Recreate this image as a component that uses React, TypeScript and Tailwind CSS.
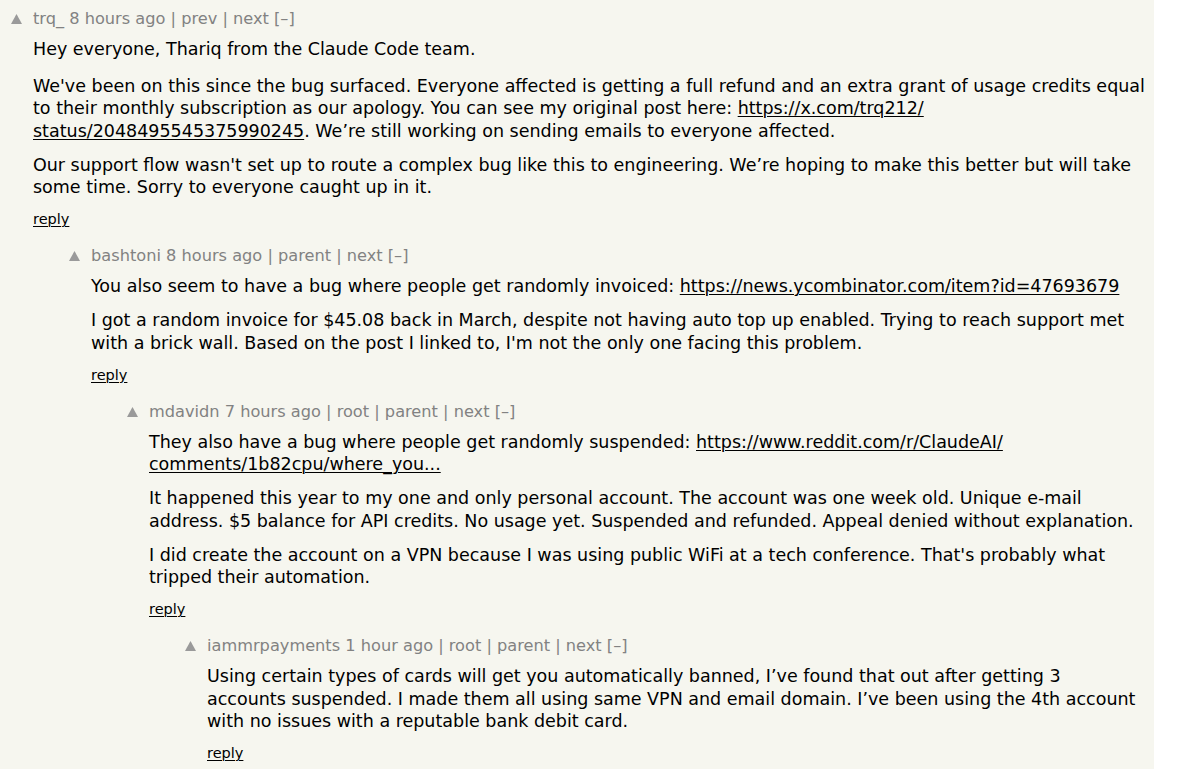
import React from "react";

const font = { fontFamily: '"DejaVu Sans", Verdana, sans-serif' };

function Link({ children }: { children: React.ReactNode }) {
  return <span className="underline decoration-1 underline-offset-2">{children}</span>;
}

function Arrow() {
  return (
    <span className="w-[33px] pl-[11px] flex items-center">
      <svg width="11" height="10" viewBox="0 0 11 10">
        <polygon points="5.5,0 11,10 0,10" fill="#9a9a9a" />
      </svg>
    </span>
  );
}

function Comment({
  indent,
  meta,
  paras,
  firstGap = "mt-[11.5px]",
}: {
  indent: string;
  meta: string;
  paras: React.ReactNode[][];
  firstGap?: string;
}) {
  return (
    <div className={`${indent} pb-[17px]`}>
      <div className="flex items-center h-[20px]">
        <Arrow />
        <span className="text-[16.2px] leading-[20px] text-[#828282] whitespace-nowrap">{meta}</span>
      </div>
      <div className="ml-[33px] mt-[9px] text-[17.5px] leading-[22.5px] text-black">
        {paras.map((lines, i) => (
          <div key={i} className={i === 0 ? "" : i === 1 ? firstGap : "mt-[11.5px]"}>
            {lines.map((l, j) => (
              <div key={j} className="whitespace-nowrap">
                {l}
              </div>
            ))}
          </div>
        ))}
        <div className="text-[14.5px] leading-[20px] mt-[10.5px]">
          <Link>reply</Link>
        </div>
      </div>
    </div>
  );
}

export default function App() {
  return (
    <div className="w-[1199px] h-[769px] overflow-hidden bg-white flex" style={font}>
      <div className="w-[1154px] shrink-0 bg-[#f6f6ef] pt-[9px]">
        <Comment
          indent="pl-0"
          meta="trq_ 8 hours ago | prev | next [–]"
          firstGap="mt-[14px]"
          paras={[
            ["Hey everyone, Thariq from the Claude Code team."],
            [
              "We've been on this since the bug surfaced. Everyone affected is getting a full refund and an extra grant of usage credits equal",
              <>
                to their monthly subscription as our apology. You can see my original post here:{" "}
                <Link>https://x.com/trq212/</Link>
              </>,
              <>
                <Link>status/2048495545375990245</Link>. We’re still working on sending emails to everyone affected.
              </>,
            ],
            [
              "Our support flow wasn't set up to route a complex bug like this to engineering. We’re hoping to make this better but will take",
              "some time. Sorry to everyone caught up in it.",
            ],
          ]}
        />
        <Comment
          indent="pl-[58px]"
          meta="bashtoni 8 hours ago | parent | next [–]"
          paras={[
            [
              <>
                You also seem to have a bug where people get randomly invoiced:{" "}
                <Link>https://news.ycombinator.com/item?id=47693679</Link>
              </>,
            ],
            [
              "I got a random invoice for $45.08 back in March, despite not having auto top up enabled. Trying to reach support met",
              "with a brick wall. Based on the post I linked to, I'm not the only one facing this problem.",
            ],
          ]}
        />
        <Comment
          indent="pl-[116px]"
          meta="mdavidn 7 hours ago | root | parent | next [–]"
          paras={[
            [
              <>
                They also have a bug where people get randomly suspended:{" "}
                <Link>https://www.reddit.com/r/ClaudeAI/</Link>
              </>,
              <Link>comments/1b82cpu/where_you...</Link>,
            ],
            [
              "It happened this year to my one and only personal account. The account was one week old. Unique e-mail",
              "address. $5 balance for API credits. No usage yet. Suspended and refunded. Appeal denied without explanation.",
            ],
            [
              "I did create the account on a VPN because I was using public WiFi at a tech conference. That's probably what",
              "tripped their automation.",
            ],
          ]}
        />
        <Comment
          indent="pl-[174px]"
          meta="iammrpayments 1 hour ago | root | parent | next [–]"
          paras={[
            [
              "Using certain types of cards will get you automatically banned, I’ve found that out after getting 3",
              "accounts suspended. I made them all using same VPN and email domain. I’ve been using the 4th account",
              "with no issues with a reputable bank debit card.",
            ],
          ]}
        />
      </div>
    </div>
  );
}
